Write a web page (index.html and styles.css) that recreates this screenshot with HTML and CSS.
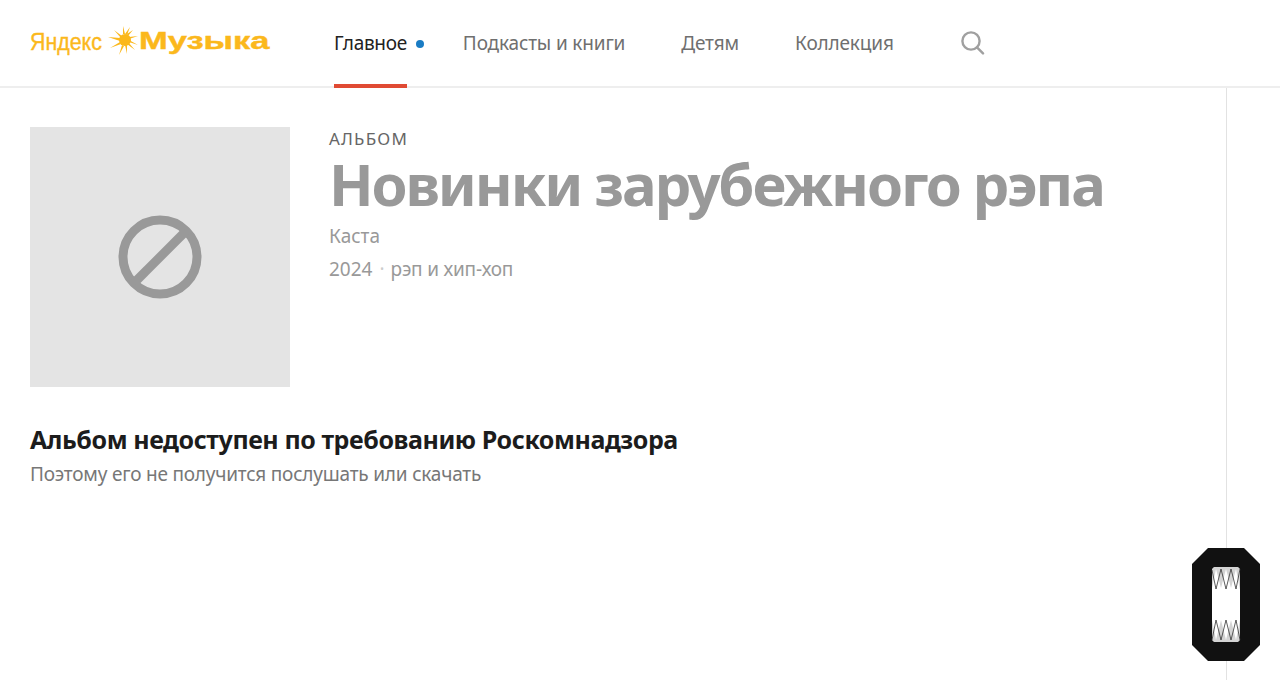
FILE: index.html
```html
<!DOCTYPE html>
<html lang="ru">
<head>
<meta charset="UTF-8">
<title>Новинки зарубежного рэпа</title>
<link rel="stylesheet" href="styles.css">
</head>
<body>
<header class="head">
  <div class="logo">
    <span class="logo-ya">Яндекс</span>
    <svg class="logo-sun" width="30" height="30" viewBox="0 0 30 30">
      <circle cx="17" cy="14" r="6" fill="#fbb81c"/>
      <path fill="#fbb81c" d="M0 11l12 1 0 3zM2 22l10-6 1 2zM6 4l8 6-1 2zM11 29l3-10 2 1zM15 0l2 8-2 0zM19 28l-2-9 2 0zM22 1l-3 8-2-1zM27 24l-8-6 1-2zM25 4l-5 6-1-2zM30 10l-9 3 0-2zM30 19l-9-3 0-2z"/>
    </svg>
    <span class="logo-music">Музыка</span>
  </div>
  <nav class="nav">
    <a class="nav-item active">Главное<i class="dot"></i></a>
    <a class="nav-item">Подкасты и книги</a>
    <a class="nav-item">Детям</a>
    <a class="nav-item">Коллекция</a>
    <svg class="search" width="24" height="24" viewBox="0 0 24 24" fill="none" stroke="#a0a0a0" stroke-width="2.4">
      <circle cx="10" cy="10" r="8.6"/>
      <path d="M16 16.4l6 6" stroke-linecap="round"/>
    </svg>
  </nav>
</header>
<div class="page">
  <main class="content">
    <section class="album">
      <div class="cover">
        <svg width="84" height="84" viewBox="0 0 84 84" fill="none" stroke="#999" stroke-width="9">
          <circle cx="42" cy="42" r="37"/>
          <path d="M68 16L16 68"/>
        </svg>
      </div>
      <div class="info">
        <div class="type">АЛЬБОМ</div>
        <h1 class="title">Новинки зарубежного рэпа</h1>
        <div class="artist">Каста</div>
        <div class="meta"><span>2024</span><span class="sep">·</span><span class="genre">рэп и хип-хоп</span></div>
      </div>
    </section>
    <h2 class="blocked">Альбом недоступен по требованию Роскомнадзора</h2>
    <p class="note">Поэтому его не получится послушать или скачать</p>
  </main>
  <aside class="side"></aside>
</div>
<svg class="badge" width="68" height="113" viewBox="0 0 68 113">
  <path fill="#111" d="M16 0H52L68 16V97L52 113H16L0 97V16Z"/>
  <rect x="20" y="19" width="28" height="75" rx="4" fill="#fff"/>
  <path fill="#d4d4d4" d="M20 23q0-4 4-4h20q4 0 4 4v19l-4-21-5 19-5-19-5 19-5-19-4 19zM20 72l4 20 5-20 5 20 5-20 5 20 4-20v18q0 4-4 4H24q-4 0-4-4z"/>
  <path fill="none" stroke="#333" stroke-width=".8" d="M20 22l4 19 5-20 5 20 5-20 5 20 4-20M20 92l4-20 5 20 5-20 5 20 5-20 4 20"/>
</svg>
</body>
</html>
```
FILE: styles.css
```css
html, body {
  margin: 0;
  height: 100%;
}
body {
  font-family: "Noto Sans", sans-serif;
  background: #fff;
  overflow: hidden;
}
.head {
  display: flex;
  align-items: center;
  height: 86px;
  padding-left: 30px;
  border-bottom: 2px solid #eee;
}
.logo {
  display: flex;
  align-items: center;
  width: 304px;
  margin-top: -3px;
  color: #fbb81c;
  font-family: "Liberation Sans", sans-serif;
  white-space: nowrap;
}
.logo-ya {
  width: 73px;
  font-size: 24px;
  -webkit-text-stroke: .4px #fbb81c;
  transform: scaleX(.89);
  transform-origin: left center;
}
.logo-sun {
  margin: -2px 1px 0 5px;
}
.logo-music {
  font-size: 23px;
  font-weight: bold;
  -webkit-text-stroke: .4px #fbb81c;
  transform: scaleX(1.5);
  transform-origin: left center;
}
.nav {
  display: flex;
  align-items: center;
  height: 100%;
  font-size: 19px;
  letter-spacing: -.15px;
  color: #6f6f6f;
}
.nav-item {
  position: relative;
  display: flex;
  align-items: center;
  height: 100%;
  margin-right: 56px;
}
.nav-item.active {
  color: #222;
  letter-spacing: -.3px;
}
.nav-item.active::after {
  content: "";
  position: absolute;
  left: 0;
  right: 0;
  bottom: -2px;
  height: 4px;
  background: #e04a33;
}
.dot {
  position: absolute;
  left: 82px;
  top: 40px;
  width: 8px;
  height: 8px;
  border-radius: 50%;
  background: #1a7cc4;
}
.search {
  margin: -1px 0 0 11px;
}
.page {
  display: flex;
  height: 592px;
}
.content {
  flex: 1;
  padding: 39px 30px 0;
}
.side {
  width: 53px;
  border-left: 1px solid #e2e2e2;
}
.album {
  display: flex;
  gap: 39px;
}
.cover {
  display: flex;
  align-items: center;
  justify-content: center;
  flex: none;
  width: 260px;
  height: 260px;
  background: #e4e4e4;
}
.type {
  margin-top: 2px;
  font-size: 17px;
  line-height: 20px;
  letter-spacing: 1.2px;
  color: #666;
}
.title {
  margin: 0;
  font-size: 58px;
  line-height: 70px;
  font-weight: 700;
  letter-spacing: -2.13px;
  color: #999;
}
.artist {
  margin-top: 4px;
  font-size: 19px;
  line-height: 26px;
  color: #999;
}
.meta {
  display: flex;
  margin-top: 7px;
  font-size: 19px;
  line-height: 26px;
  color: #999;
}
.sep {
  margin: 0 6px 0 7px;
  color: #ccc;
}
.genre {
  letter-spacing: -.2px;
}
.blocked {
  margin: 35px 0 0;
  font-size: 25px;
  line-height: 34px;
  font-weight: 700;
  letter-spacing: -.43px;
  color: #1c1c1c;
}
.note {
  margin: 5px 0 0;
  font-size: 19px;
  line-height: 26px;
  letter-spacing: -.2px;
  color: #777;
}
.badge {
  position: absolute;
  left: 1192px;
  top: 548px;
}
```
